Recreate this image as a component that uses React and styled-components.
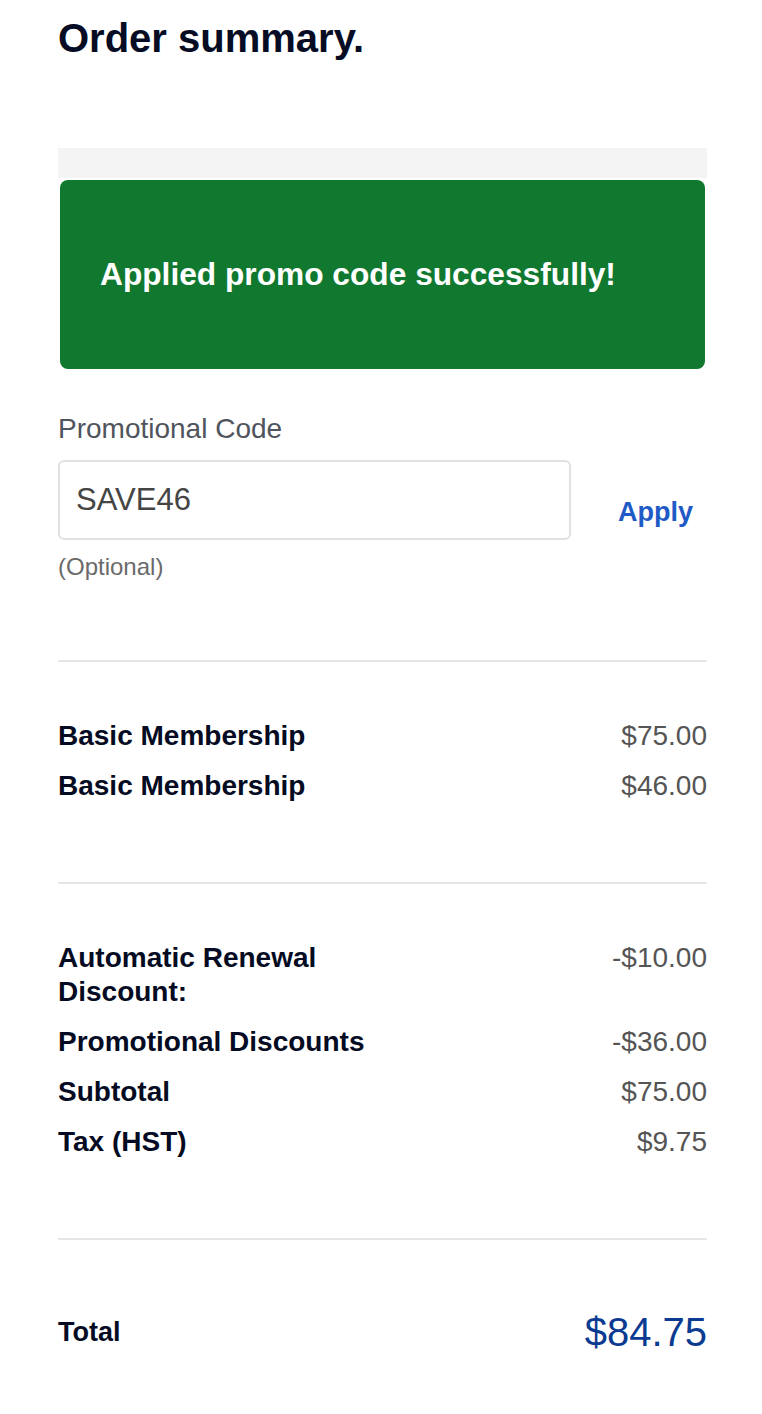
import React from "react";
import styled, { createGlobalStyle } from "styled-components";

const GlobalStyle = createGlobalStyle`
  html, body { margin: 0; padding: 0; background: #ffffff; }
  body { font-family: "Liberation Sans", Arial, Helvetica, sans-serif; }
  * { box-sizing: border-box; }
`;

const Page = styled.div`
  width: 762px;
  padding: 0 55px 0 58px;
`;

const Title = styled.h1`
  margin: 16px 0 0;
  font-size: 40px;
  line-height: 44px;
  font-weight: 700;
  color: #060c24;
`;

const AlertArea = styled.div`
  margin-top: 88px;
  display: flex;
  flex-direction: column;
`;

const AlertStrip = styled.div`
  height: 30px;
  background: #f4f4f4;
`;

const Alert = styled.div`
  margin: 2px 2px 1px;
  height: 189px;
  border-radius: 8px;
  background: #10782f;
  display: flex;
  align-items: center;
  padding: 0 40px;
  color: #ffffff;
  font-size: 31.7px;
  font-weight: 700;
`;

const FieldLabel = styled.label`
  display: block;
  margin-top: 44px;
  font-size: 28px;
  line-height: 30px;
  color: #50545c;
`;

const FieldRow = styled.div`
  margin-top: 16px;
  display: flex;
  align-items: flex-start;
`;

const CodeInput = styled.input`
  width: 513px;
  height: 80px;
  border: 2px solid #e2e2e2;
  border-radius: 6px;
  padding: 0 16px;
  font-family: "Liberation Sans", Arial, sans-serif;
  font-size: 31px;
  color: #454545;
  outline: none;
`;

const ApplyButton = styled.button`
  margin: 37px 0 0 47px;
  padding: 0;
  border: none;
  background: none;
  font-family: "Liberation Sans", Arial, sans-serif;
  font-size: 27px;
  line-height: 30px;
  font-weight: 700;
  color: #1f5bc6;
  cursor: pointer;
`;

const Hint = styled.div`
  margin-top: 14px;
  font-size: 24px;
  line-height: 26px;
  color: #6a6a6a;
`;

const Divider = styled.hr`
  margin: ${(p) => p.$top || 80}px 0 0;
  border: none;
  height: 2px;
  background: #e6e6e6;
`;

const Section = styled.div`
  padding-top: ${(p) => p.$top || 57}px;
  display: flex;
  flex-direction: column;
  gap: 16px;
`;

const Row = styled.div`
  display: flex;
  justify-content: space-between;
  align-items: ${(p) => (p.$center ? "center" : "flex-start")};
`;

const Label = styled.div`
  max-width: 330px;
  font-size: ${(p) => p.$size || 28}px;
  line-height: 34px;
  font-weight: 700;
  color: #050b22;
`;

const Value = styled.div`
  font-size: ${(p) => p.$size || 28}px;
  line-height: ${(p) => (p.$size ? 50 : 34)}px;
  color: ${(p) => p.$color || "#555555"};
  white-space: nowrap;
`;

const items = [
  ["Basic Membership", "$75.00"],
  ["Basic Membership", "$46.00"],
];

const totals = [
  ["Automatic Renewal Discount:", "-$10.00"],
  ["Promotional Discounts", "-$36.00"],
  ["Subtotal", "$75.00"],
  ["Tax (HST)", "$9.75"],
];

export default function App() {
  return (
    <>
      <GlobalStyle />
      <Page>
        <Title>Order summary.</Title>
        <AlertArea>
          <AlertStrip />
          <Alert>Applied promo code successfully!</Alert>
        </AlertArea>
        <FieldLabel htmlFor="promo">Promotional Code</FieldLabel>
        <FieldRow>
          <CodeInput id="promo" defaultValue="SAVE46" />
          <ApplyButton type="button">Apply</ApplyButton>
        </FieldRow>
        <Hint>(Optional)</Hint>
        <Divider />
        <Section>
          {items.map(([l, v], i) => (
            <Row key={i}>
              <Label>{l}</Label>
              <Value>{v}</Value>
            </Row>
          ))}
        </Section>
        <Divider $top={79} />
        <Section>
          {totals.map(([l, v], i) => (
            <Row key={i}>
              <Label>{l}</Label>
              <Value>{v}</Value>
            </Row>
          ))}
        </Section>
        <Divider $top={79} />
        <Section $top={67}>
          <Row $center>
            <Label $size={27}>Total</Label>
            <Value $size={40} $color="#0b3a91">$84.75</Value>
          </Row>
        </Section>
      </Page>
    </>
  );
}
